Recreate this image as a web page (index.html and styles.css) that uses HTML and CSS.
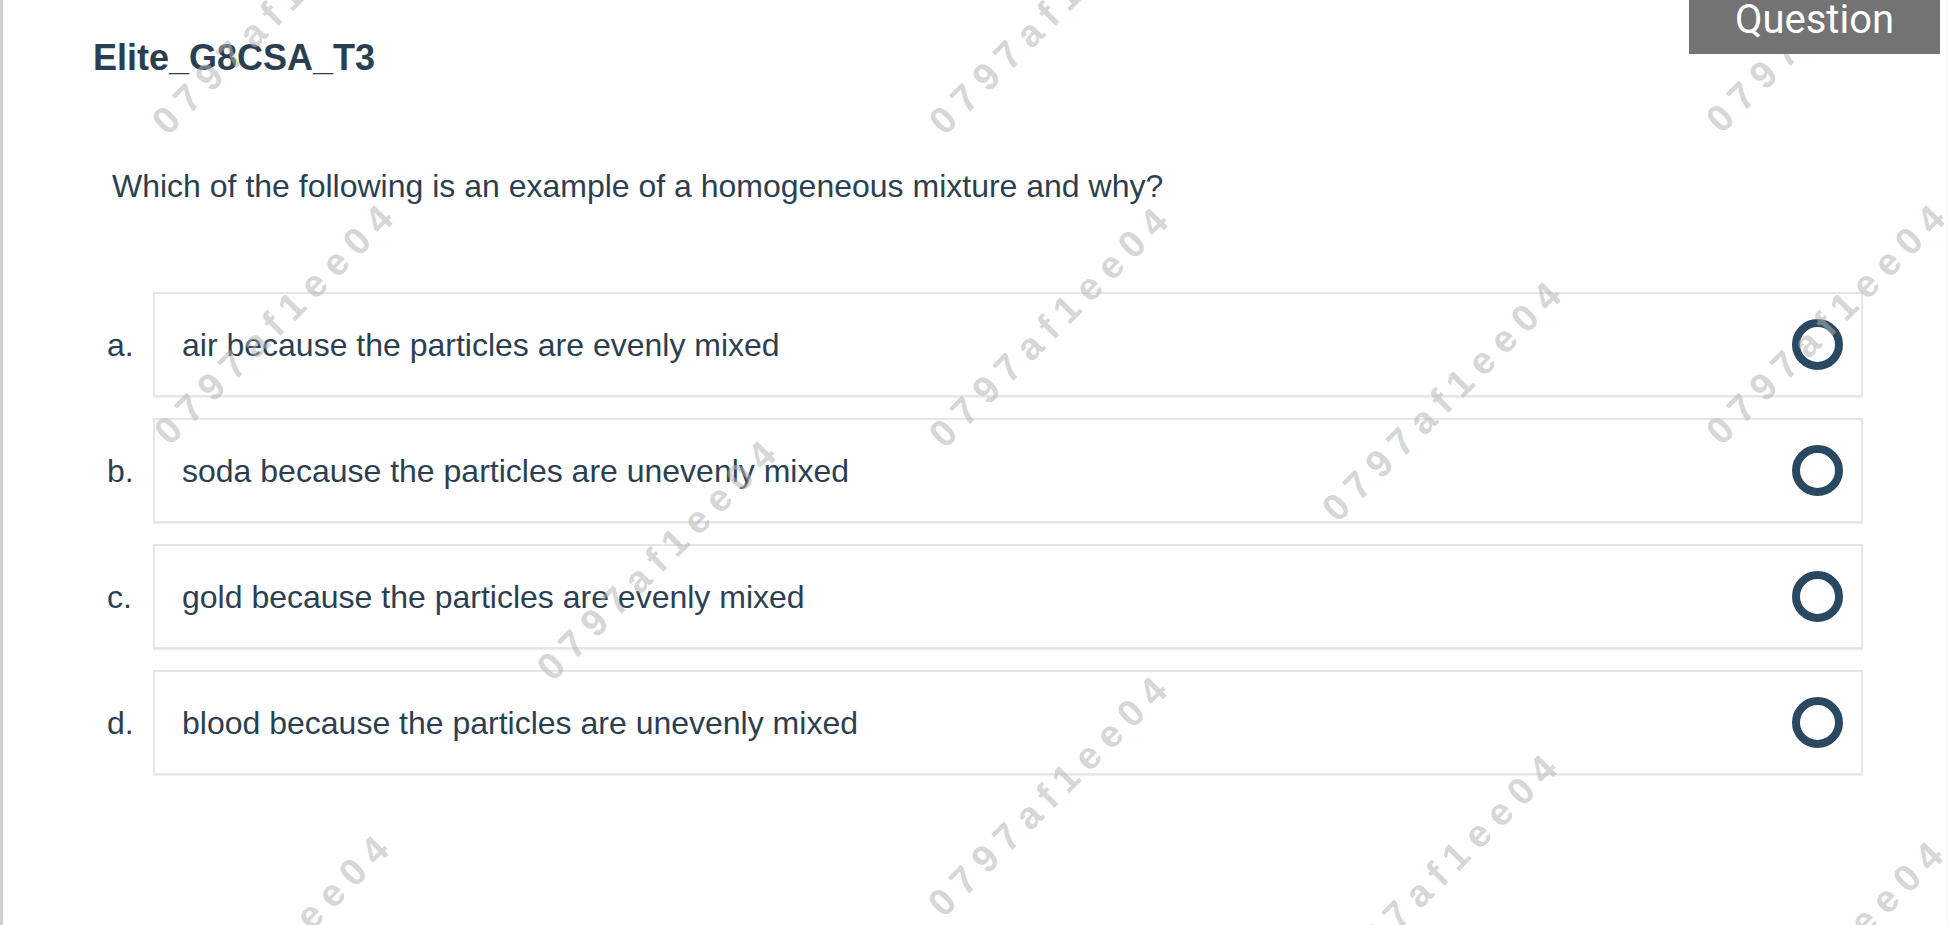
FILE: index.html
```html
<!DOCTYPE html>
<html lang="en">
<head>
<meta charset="utf-8">
<title>Elite_G8CSA_T3</title>
<link rel="stylesheet" href="styles.css">
</head>
<body>
<div class="page">
  <header class="top">
    <h1 class="title">Elite_G8CSA_T3</h1>
    <div class="tab">Question</div>
  </header>
  <p class="question">Which of the following is an example of a homogeneous mixture and why?</p>
  <ol class="options">
    <li class="option"><span class="label">a.</span><div class="box"><span class="text">air because the particles are evenly mixed</span><span class="radio"></span></div></li>
    <li class="option"><span class="label">b.</span><div class="box"><span class="text">soda because the particles are unevenly mixed</span><span class="radio"></span></div></li>
    <li class="option"><span class="label">c.</span><div class="box"><span class="text">gold because the particles are evenly mixed</span><span class="radio"></span></div></li>
    <li class="option"><span class="label">d.</span><div class="box"><span class="text">blood because the particles are unevenly mixed</span><span class="radio"></span></div></li>
  </ol>
</div>
<div class="wm-layer" aria-hidden="true">
  <div class="wm wm1">0797af1ee04</div>
  <div class="wm wm2">0797af1ee04</div>
  <div class="wm wm3">0797af1ee04</div>
  <div class="wm wm4">0797af1ee04</div>
  <div class="wm wm5">0797af1ee04</div>
  <div class="wm wm6">0797af1ee04</div>
  <div class="wm wm7">0797af1ee04</div>
  <div class="wm wm8">0797af1ee04</div>
  <div class="wm wm9">0797af1ee04</div>
  <div class="wm wm10">0797af1ee04</div>
  <div class="wm wm11">0797af1ee04</div>
  <div class="wm wm12">0797af1ee04</div>
</div>
</body>
</html>
```
FILE: styles.css
```css
html, body {
  margin: 0;
  padding: 0;
}
body {
  position: relative;
  height: 925px;
  overflow: hidden;
  background: #fff;
  font-family: "Liberation Sans", Arial, sans-serif;
  color: #2c3f52;
}
.page {
  height: 925px;
  box-sizing: border-box;
  border-left: 3px solid #cfcfcf;
  border-right: 1px solid #efefef;
}
.top {
  display: flex;
  justify-content: space-between;
  align-items: flex-start;
  padding: 0 7px 0 90px;
}
.title {
  margin: 37px 0 0;
  font-size: 36px;
  font-weight: 700;
  line-height: 41px;
  color: #2c3f52;
}
.tab {
  position: relative;
  z-index: 2;
  width: 251px;
  height: 54px;
  box-sizing: border-box;
  background: #737373;
  color: #fff;
  font-family: Roboto, "Liberation Sans", sans-serif;
  font-size: 40px;
  line-height: 40px;
  text-align: center;
}
.question {
  margin: 90px 0 0;
  padding-left: 109px;
  font-size: 32px;
  line-height: 36px;
}
.options {
  list-style: none;
  margin: 88px 0 0;
  padding: 0 84px 0 104px;
  display: flex;
  flex-direction: column;
  gap: 21px;
}
.option {
  display: flex;
  align-items: center;
}
.label {
  width: 46px;
  font-size: 32px;
  line-height: 36px;
}
.box {
  flex: 1;
  height: 105px;
  box-sizing: border-box;
  border: 2px solid #e6e6e6;
  box-shadow: 0 1px 1px rgba(0, 0, 0, 0.06);
  display: flex;
  align-items: center;
  justify-content: space-between;
  padding: 0 18px 0 27px;
}
.text {
  font-size: 32px;
  line-height: 36px;
}
.radio {
  width: 51px;
  height: 51px;
  box-sizing: border-box;
  border: 8px solid #2a4862;
  border-radius: 50%;
}
.wm-layer {
  position: absolute;
  left: 0;
  top: 0;
  width: 1948px;
  height: 925px;
  overflow: hidden;
  z-index: 1;
  pointer-events: none;
}
.wm {
  position: absolute;
  font-family: "Liberation Sans", Arial, sans-serif;
  font-weight: 700;
  font-size: 38px;
  line-height: 1;
  letter-spacing: 9.5px;
  color: rgba(180, 180, 180, 0.55);
  white-space: nowrap;
  transform-origin: 0 0;
  transform: rotate(-45deg);
}
.wm1 { left: 145px; top: 114px; }
.wm2 { left: 922px; top: 114px; }
.wm3 { left: 1699px; top: 112px; }
.wm4 { left: 147px; top: 424px; }
.wm5 { left: 922px; top: 427px; }
.wm6 { left: 1699px; top: 424px; }
.wm7 { left: 1315px; top: 501px; }
.wm8 { left: 530px; top: 660px; }
.wm9 { left: 921px; top: 896px; }
.wm10 { left: 143px; top: 1055px; }
.wm11 { left: 1311px; top: 974px; }
.wm12 { left: 1697px; top: 1061px; }
```
